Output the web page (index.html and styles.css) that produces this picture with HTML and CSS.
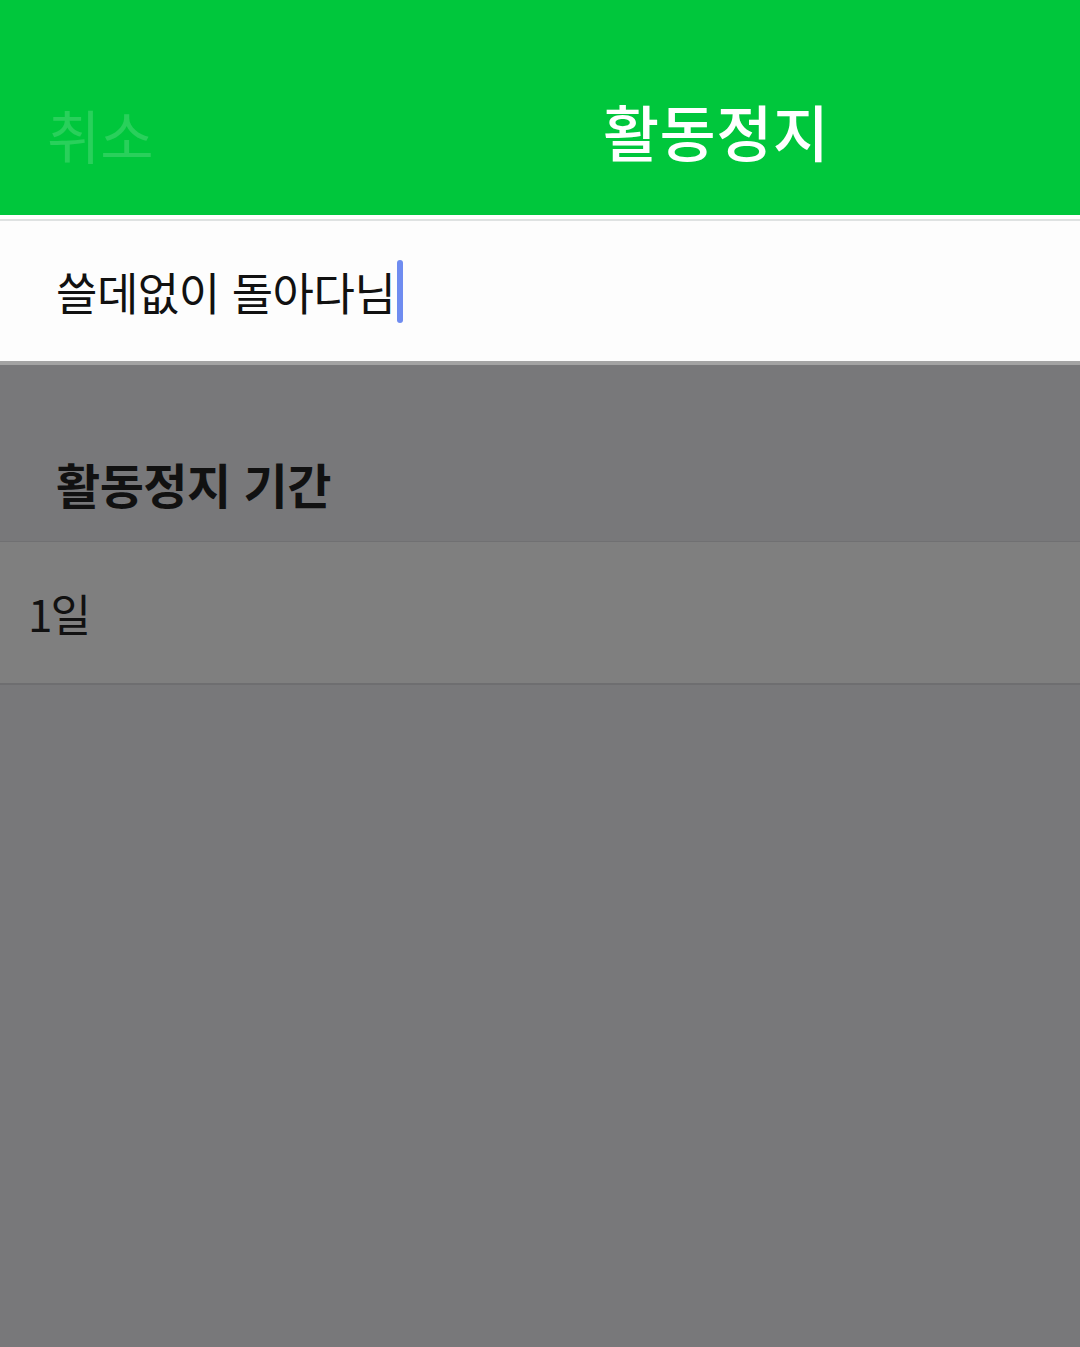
FILE: index.html
```html
<!DOCTYPE html>
<html lang="ko">
<head>
    <meta charset="UTF-8">
    <meta name="viewport" content="width=device-width, initial-scale=1.0">
    <title>활동정지</title>
    <link rel="stylesheet" href="styles.css">
</head>
<body>

    <header class="top-bar">
        <span class="cancel">취소</span>
        <h1 class="title">활동정지</h1>
    </header>

    <div class="reason-row">
        <span class="reason-text">쓸데없이 돌아다님</span><span class="caret"></span>
    </div>

    <div class="dimmed">
        <h2 class="section-title">활동정지 기간</h2>
        <div class="option-row">1일</div>
    </div>

</body>
</html>
```

FILE: styles.css
```css
* {
    box-sizing: border-box;
}

html, body {
    height: 100%;
}

body {
    margin: 0;
    padding: 0;
    font-family: "Noto Sans CJK KR", "Noto Sans", sans-serif;
    background-color: #78787a;
    display: flex;
    flex-direction: column;
}

.top-bar {
    height: 219px;
    background-color: #00c73c;
    border-bottom: 4px solid #ffffff;
    display: flex;
    align-items: center;
    padding: 52px 0 0 47px;
}

.cancel {
    font-size: 58px;
    color: rgba(255, 255, 255, 0.16);
    width: 556px;
}

.title {
    margin: 0;
    font-size: 61px;
    font-weight: 500;
    color: #fff;
    letter-spacing: 0.5px;
    margin-top: -6px;
}

.reason-row {
    height: 146px;
    background-color: #fdfdfd;
    border-top: 2px solid #dfe2e2;
    border-bottom: 4px solid #a3a3a3;
    display: flex;
    align-items: center;
    padding: 0 0 0 56px;
}

.reason-text {
    font-size: 45px;
    color: #111;
    letter-spacing: -0.5px;
}

.caret {
    display: inline-block;
    width: 6px;
    height: 63px;
    border-radius: 3px;
    background-color: #6f8cf0;
    margin-left: 2px;
}

.dimmed {
    flex: 1;
}

.section-title {
    margin: 0;
    height: 176px;
    display: flex;
    align-items: center;
    padding: 59px 0 0 56px;
    font-size: 48px;
    font-weight: 700;
    color: #111;
    letter-spacing: -0.5px;
}

.option-row {
    height: 144px;
    background-color: #7f7f7f;
    border-top: 1px solid #707072;
    border-bottom: 2px solid #6e6e70;
    display: flex;
    align-items: center;
    padding: 0 0 0 28px;
    font-size: 44px;
    color: #111;
    letter-spacing: -2px;
}
```
